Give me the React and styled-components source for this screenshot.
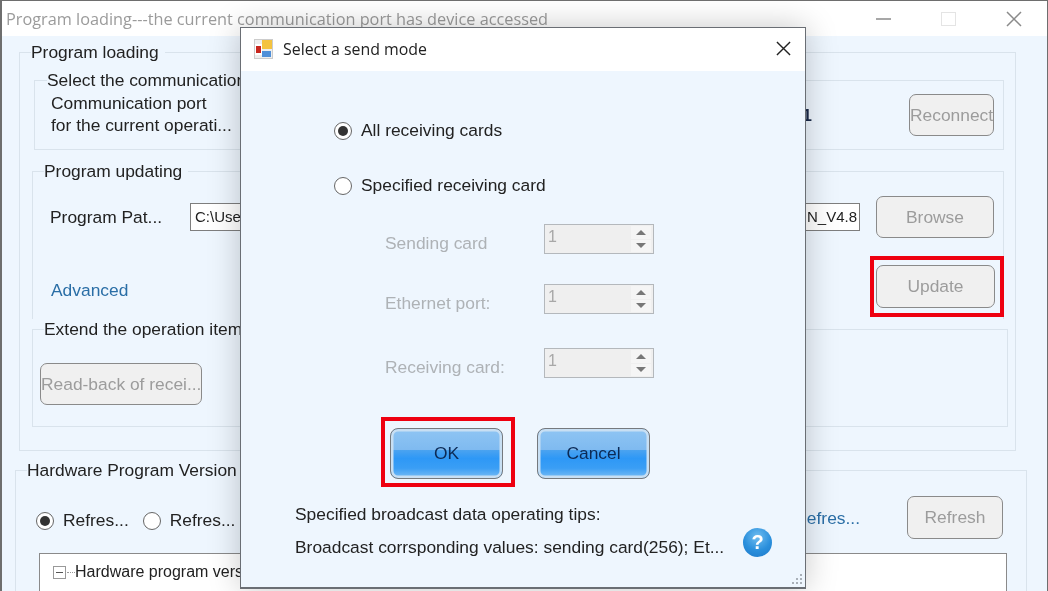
import React from "react";
import styled, { createGlobalStyle, css } from "styled-components";

const Global = createGlobalStyle`
  html, body { margin: 0; padding: 0; background: #fff; }
  body { font-family: "Liberation Sans", Arial, sans-serif; font-size: 17.4px; color: #222; }
  * { box-sizing: border-box; }
`;

const Window = styled.div`
  position: relative;
  width: 1048px;
  height: 591px;
  overflow: hidden;
  display: flex;
  flex-direction: column;
  border: solid #6e6e6e;
  border-width: 1px 1px 0 2px;
  background: #eef6fe;
  filter: blur(0.4px);
`;

const TitleBar = styled.div`
  height: 35px;
  flex: none;
  background: #fff;
  display: flex;
  align-items: center;
  padding: 0 25px 0 4px;
`;

const WindowTitle = styled.div`
  flex: 1;
  font-family: "Open Sans", sans-serif;
  font-size: 16.3px;
  color: #9b9b9b;
`;

const WindowControls = styled.div`
  display: flex;
  align-items: center;
  gap: 50px;
  color: #8a8a8a;
`;

const Group = styled.div`
  position: relative;
  flex: none;
  border: 1px solid #d9e3ec;
  ${p => p.$open && css`border-bottom: none;`}
  margin: ${p => p.$margin};
  height: ${p => p.$height}px;
  padding: ${p => p.$padding || 0};
`;

const Legend = styled.div`
  position: absolute;
  top: -11px;
  left: ${p => p.$left}px;
  line-height: 20px;
  background: #eef6fe;
  white-space: nowrap;
  padding-right: 6px;
`;

const SpaceRow = styled.div`
  display: flex;
  align-items: center;
  justify-content: space-between;
`;

const PortText = styled.div`
  line-height: 22px;
  white-space: nowrap;
  flex: 1;
  margin-top: -2px;
`;

const PortValue = styled.span`
  color: #1a2a4a;
  margin-right: 97px;
  font-weight: 700;
`;

const ActionButton = styled.button`
  position: relative;
  flex: none;
  width: ${p => p.$width}px;
  height: ${p => p.$height || 42}px;
  padding: 0;
  border: 1.5px solid #8a8a8a;
  border-radius: 7px;
  background: #f0f0f0;
  color: #9c9c9c;
  font: inherit;
  white-space: nowrap;
  overflow: visible;
  ${p => p.$marked && css`
    margin-right: -1px;
    &::after {
      content: "";
      position: absolute;
      inset: -10px -10px -10px -7px;
      border: 4px solid #ee0010;
    }
  `}
`;

const PathLabel = styled.div`
  width: 140px;
  white-space: nowrap;
`;

const PathInput = styled.div`
  width: 670px;
  height: 28px;
  border: 1px solid #7e7e7e;
  background: #fff;
  font-size: 15px;
  line-height: 26px;
  padding: 0 2px 0 4px;
  display: flex;
  justify-content: space-between;
  margin-right: 16px;
`;

const AdvancedRow = styled.div`
  display: flex;
  align-items: center;
  justify-content: space-between;
  margin-top: 27px;
`;

const LinkText = styled.span`
  color: #2a6ea6;
  margin: 8px 0 0 1px;
`;

const RadioMark = styled.span`
  flex: none;
  display: inline-block;
  position: relative;
  width: 18px;
  height: 18px;
  border: 1.5px solid #666;
  border-radius: 50%;
  background: #fff;
  ${p => p.$checked && css`
    &::after {
      content: "";
      position: absolute;
      inset: 3px;
      border-radius: 50%;
      background: #333;
    }
  `}
`;

const RadioItem = styled.label`
  display: flex;
  align-items: center;
  gap: ${p => p.$gap || 9}px;
  white-space: nowrap;
`;

const HardwareRow = styled.div`
  display: flex;
  align-items: center;
  height: 43px;
`;

const RadioGroup = styled.div`
  display: flex;
  gap: 14px;
  flex: 1;
  margin-top: 6px;
`;

const RefreshLink = styled.span`
  color: #2a6ea6;
  margin-right: 47px;
  margin-top: 2px;
`;

const Tree = styled.div`
  margin: 14px -4px 0 3px;
  height: 80px;
  border: 1px solid #8a8a8a;
  background: #fff;
  padding: 9px 13px;
`;

const TreeRow = styled.div`
  display: flex;
  align-items: center;
  font-size: 16px;
  line-height: 18px;
  white-space: nowrap;
`;

const TreeToggle = styled.span`
  width: 13px;
  height: 13px;
  border: 1px solid #999;
  display: flex;
  align-items: center;
  justify-content: center;
  margin-right: 1px;
  &::after { content: ""; width: 7px; height: 1px; background: #555; }
`;

const TreeDash = styled.span`
  width: 8px;
  border-top: 1px dotted #999;
`;

const Dialog = styled.div`
  position: absolute;
  left: 238px;
  top: 26px;
  width: 566px;
  height: 562px;
  border: 1px solid #6a6e74;
  border-width: 1px 1px 2px 1px;
  background: #eef6fe;
  box-shadow: 0 0 30px rgba(0, 0, 0, 0.22);
  display: flex;
  flex-direction: column;
`;

const DialogHead = styled.div`
  height: 43px;
  flex: none;
  background: #fff;
  display: flex;
  align-items: center;
  padding: 0 14px 2px 13px;
  gap: 10px;
`;

const DialogTitle = styled.div`
  flex: 1;
  font-family: "Open Sans", sans-serif;
  font-size: 15.9px;
  color: #222;
`;

const DialogBody = styled.div`
  flex: 1;
  display: flex;
  flex-direction: column;
  padding: 49px 0 0 93px;
`;

const ModeOption = styled.div`
  height: 20px;
  margin-bottom: 35px;
`;

const FieldRow = styled.div`
  display: flex;
  align-items: center;
  height: 30px;
  margin: ${p => p.$top}px 0 0 51px;
`;

const FieldLabel = styled.div`
  width: 159px;
  color: #aeb2b6;
  margin-top: 8px;
  white-space: nowrap;
`;

const Spin = styled.div`
  width: 110px;
  height: 30px;
  border: 1.5px solid #b4b8bc;
  background: #efefef;
  display: flex;
  color: #a8a8a8;
  padding: 1px 2px 1px 3px;
  font-size: 16px;
  line-height: 22px;
`;

const SpinValue = styled.div`
  flex: 1;
`;

const SpinArrows = styled.div`
  width: 20px;
  display: flex;
  flex-direction: column;
  gap: 1px;
`;

const SpinArrow = styled.div`
  flex: 1;
  background: #f5f5f5;
  display: flex;
  align-items: center;
  justify-content: center;
  &::after {
    content: "";
    border: 5px solid transparent;
    border-top: none;
    border-bottom: 5px solid #777;
    ${p => p.$down && css`
      border-bottom: none;
      border-top: 5px solid #777;
    `}
  }
`;

const ButtonRow = styled.div`
  display: flex;
  gap: 34px;
  margin: 50px 0 0 56px;
`;

const GlossButton = styled.button`
  position: relative;
  width: 113px;
  height: 51px;
  padding: 0;
  border: 1.5px solid #75797e;
  border-radius: 8px;
  font: inherit;
  color: #0c2a55;
  background: linear-gradient(to bottom,
    #8fc5f3 0%, #7fbaf0 42%, #4ba3f0 43%, #2e98f6 60%, #3a9ef5 80%, #79bdf5 100%);
  box-shadow: inset 0 0 0 2.5px #c8dff3;
  ${p => p.$marked && css`
    &::after {
      content: "";
      position: absolute;
      inset: -12px -13px -9px -10px;
      border: 4px solid #ee0010;
    }
  `}
`;

const Tips = styled.div`
  margin: 24px 0 0 -39px;
  display: flex;
  flex-direction: column;
  gap: 11px;
  white-space: nowrap;
`;

const TipLine = styled.div`
  display: flex;
  align-items: center;
  height: 22px;
`;

const TipText = styled.div`
  flex: 0 0 448px;
`;

const HelpIcon = styled.div`
  flex: none;
  width: 29px;
  height: 29px;
  margin-top: -10px;
  border-radius: 50%;
  background: radial-gradient(circle at 50% 30%, #6fbdf0 0%, #2a8fdc 55%, #1d78c8 100%);
  color: #fff;
  font-weight: 700;
  font-size: 20px;
  display: flex;
  align-items: center;
  justify-content: center;
`;

const Grip = styled.svg`
  position: absolute;
  right: 1px;
  bottom: 1px;
`;

const Radio = ({ checked, children, gap }) => (
  <RadioItem $gap={gap}>
    <RadioMark $checked={checked} />
    {children}
  </RadioItem>
);

const SpinField = ({ label, top }) => (
  <FieldRow $top={top}>
    <FieldLabel>{label}</FieldLabel>
    <Spin>
      <SpinValue>1</SpinValue>
      <SpinArrows>
        <SpinArrow />
        <SpinArrow $down />
      </SpinArrows>
    </Spin>
  </FieldRow>
);

const AppIcon = () => (
  <svg width="19" height="20" viewBox="0 0 19 20">
    <rect x="0.5" y="0.5" width="18" height="19" fill="#eee" stroke="#ccc" />
    <rect x="1" y="5" width="7" height="11" fill="#fff" />
    <rect x="2" y="7" width="5" height="7" fill="#c8261e" />
    <rect x="8" y="1" width="10" height="9" fill="#f4c33f" />
    <rect x="8" y="12" width="9" height="6" fill="#4f8fd8" />
  </svg>
);

const CloseIcon = ({ size, color }) => (
  <svg width={size} height={size} viewBox="0 0 16 16">
    <path d="M1 1L15 15M15 1L1 15" stroke={color} strokeWidth="1.5" />
  </svg>
);

export default function App() {
  return (
    <>
      <Global />
      <Window>
        <TitleBar>
          <WindowTitle>Program loading---the current communication port has device accessed</WindowTitle>
          <WindowControls>
            <svg width="15" height="14" viewBox="0 0 15 14"><path d="M0 7H15" stroke="#8a8a8a" strokeWidth="1.5" /></svg>
            <svg width="15" height="14" viewBox="0 0 15 14"><rect x="0.5" y="0.5" width="14" height="13" fill="none" stroke="#e4e4e4" /></svg>
            <CloseIcon size={16} color="#8a8a8a" />
          </WindowControls>
        </TitleBar>

        <Group $margin="16px 31px 0 17px" $height={399}>
          <Legend $left={11}>Program loading</Legend>

          <Group $margin="27px 11px 0 14px" $height={70} $padding="13px 9px 0 16px">
            <Legend $left={12}>Select the communication</Legend>
            <SpaceRow>
              <PortText>Communication port<br />for the current operati...</PortText>
              <PortValue>COM1</PortValue>
              <ActionButton $width={85}>Reconnect</ActionButton>
            </SpaceRow>
          </Group>

          <Group $open $margin="21px 11px 0 12px" $height={148} $padding="24px 9px 0 17px">
            <Legend $left={11}>Program updating</Legend>
            <SpaceRow>
              <PathLabel>Program Pat...</PathLabel>
              <PathInput>
                <span>C:\Users\Default\Program</span>
                <span>N_V4.8</span>
              </PathInput>
              <ActionButton $width={118}>Browse</ActionButton>
            </SpaceRow>
            <AdvancedRow>
              <LinkText>Advanced</LinkText>
              <ActionButton $width={119} $height={43} $marked>Update</ActionButton>
            </AdvancedRow>
          </Group>

          <Group $margin="10px 7px 0 12px" $height={98} $padding="33px 0 0 7px">
            <Legend $left={11}>Extend the operation item</Legend>
            <ActionButton $width={162}>Read-back of recei...</ActionButton>
          </Group>
        </Group>

        <Group $open $margin="19px 20px 0 13px" $height={140} $padding="25px 23px 0 20px">
          <Legend $left={11}>Hardware Program Version</Legend>
          <HardwareRow>
            <RadioGroup>
              <Radio checked gap={9}>Refres...</Radio>
              <Radio gap={9}>Refres...</Radio>
            </RadioGroup>
            <RefreshLink>Refres...</RefreshLink>
            <ActionButton $width={96} $height={43}>Refresh</ActionButton>
          </HardwareRow>
          <Tree>
            <TreeRow>
              <TreeToggle />
              <TreeDash />
              Hardware program version
            </TreeRow>
          </Tree>
        </Group>

        <Dialog>
          <DialogHead>
            <AppIcon />
            <DialogTitle>Select a send mode</DialogTitle>
            <CloseIcon size={15} color="#222" />
          </DialogHead>
          <DialogBody>
            <ModeOption><Radio checked>All receiving cards</Radio></ModeOption>
            <ModeOption><Radio>Specified receiving card</Radio></ModeOption>
            <SpinField label="Sending card" top={-6} />
            <SpinField label="Ethernet port:" top={30} />
            <SpinField label="Receiving card:" top={34} />
            <ButtonRow>
              <GlossButton $marked>OK</GlossButton>
              <GlossButton>Cancel</GlossButton>
            </ButtonRow>
            <Tips>
              <TipLine>Specified broadcast data operating tips:</TipLine>
              <TipLine>
                <TipText>Broadcast corrsponding values: sending card(256); Et...</TipText>
                <HelpIcon>?</HelpIcon>
              </TipLine>
            </Tips>
          </DialogBody>
          <Grip width="14" height="14" viewBox="0 0 14 14" fill="#a9b0b8">
            <rect x="10" y="2" width="2" height="2" />
            <rect x="6" y="6" width="2" height="2" />
            <rect x="10" y="6" width="2" height="2" />
            <rect x="2" y="10" width="2" height="2" />
            <rect x="6" y="10" width="2" height="2" />
            <rect x="10" y="10" width="2" height="2" />
          </Grip>
        </Dialog>
      </Window>
    </>
  );
}
